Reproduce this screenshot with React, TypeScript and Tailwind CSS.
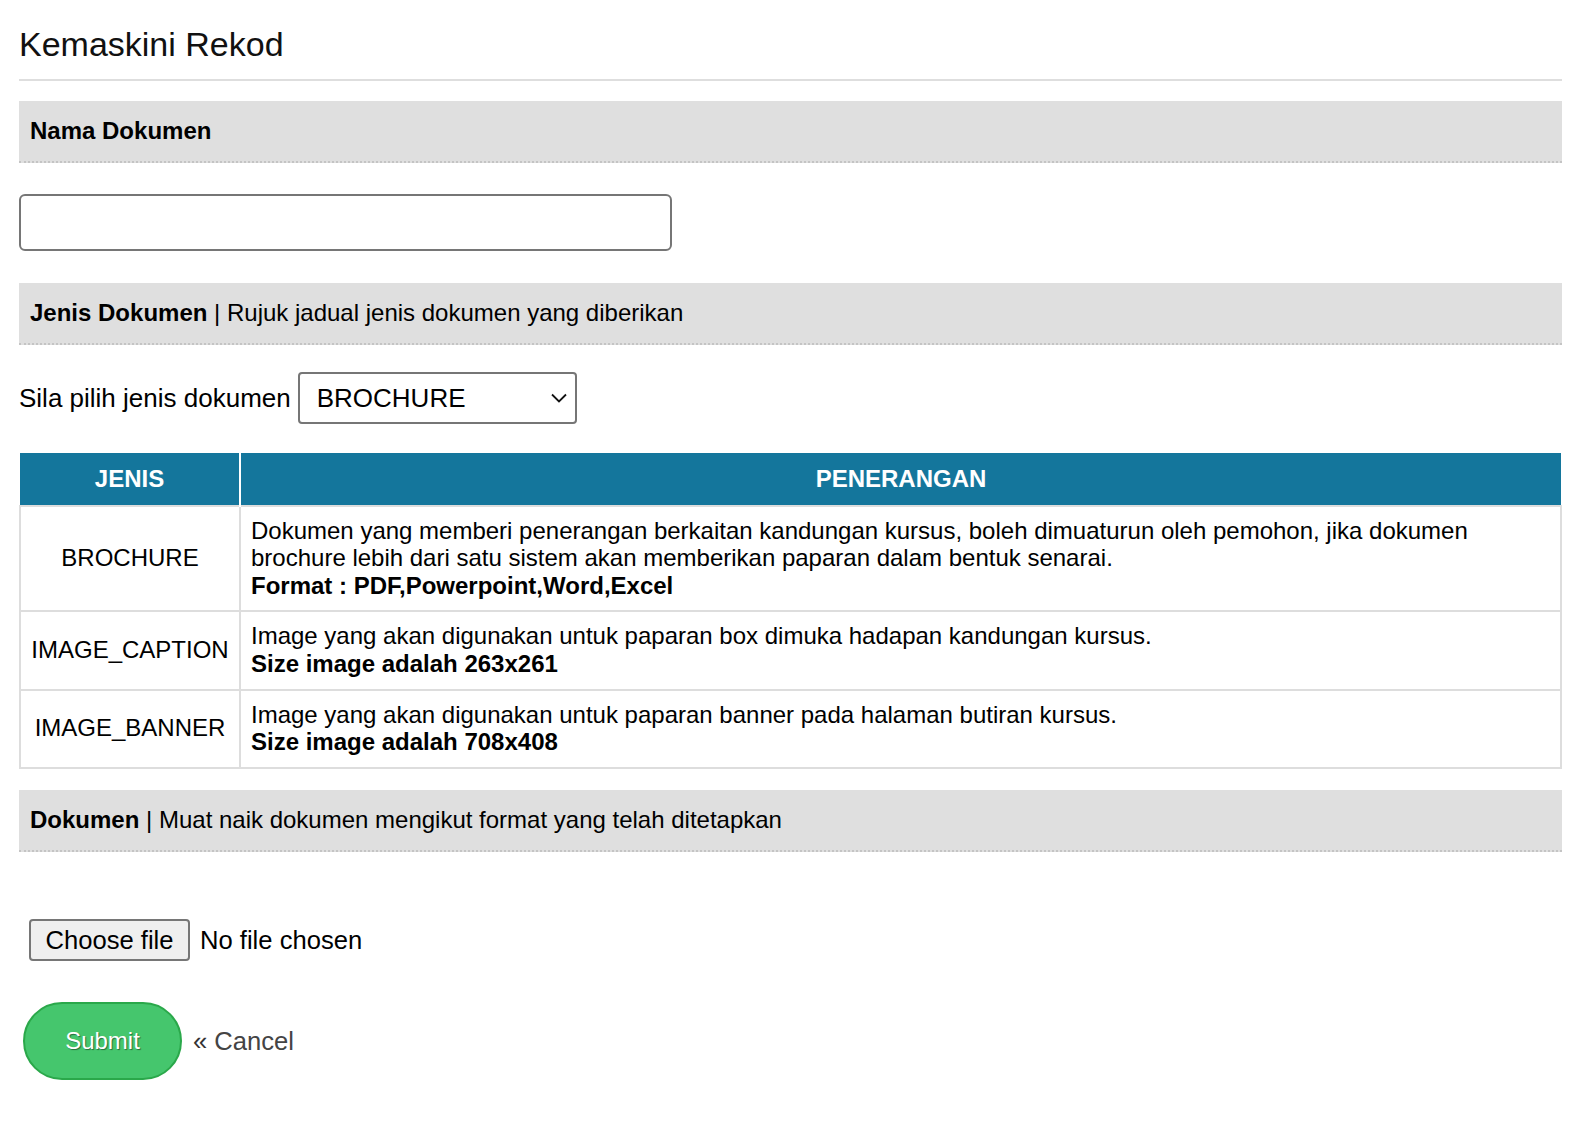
const rows = [
    {
        jenis: "BROCHURE",
        text: "Dokumen yang memberi penerangan berkaitan kandungan kursus, boleh dimuaturun oleh pemohon, jika dokumen brochure lebih dari satu sistem akan memberikan paparan dalam bentuk senarai.",
        bold: "Format : PDF,Powerpoint,Word,Excel",
    },
    {
        jenis: "IMAGE_CAPTION",
        text: "Image yang akan digunakan untuk paparan box dimuka hadapan kandungan kursus.",
        bold: "Size image adalah 263x261",
    },
    {
        jenis: "IMAGE_BANNER",
        text: "Image yang akan digunakan untuk paparan banner pada halaman butiran kursus.",
        bold: "Size image adalah 708x408",
    },
];

const SectionBar = ({ title, note }: { title: string; note?: string }) => (
    <div className="h-[62px] flex items-center px-[11px] bg-[#dfdfdf] border-b-2 border-dotted border-[#c4c4c4] text-[24px] text-black">
        <span className="font-bold">{title}</span>
        {note && <span>&nbsp;| {note}</span>}
    </div>
);

const App = () => {
    return (
        <div className="min-h-screen bg-white font-['Liberation_Sans',Arial,sans-serif] text-black">
            <div className="ml-[19px] w-[1543px] pt-[25px]">
                <h1 className="text-[34px] leading-[1.15] text-[#111]">Kemaskini Rekod</h1>
                <div className="mt-[15px] h-[2px] bg-[#dedede]" />

                <div className="mt-[20px]">
                    <SectionBar title="Nama Dokumen" />
                </div>
                <input
                    type="text"
                    className="mt-[31px] block w-[653px] h-[57px] rounded-[6px] border-2 border-[#767676] px-3 text-[25.6px] outline-none"
                />

                <div className="mt-[32px]">
                    <SectionBar title="Jenis Dokumen" note="Rujuk jadual jenis dokumen yang diberikan" />
                </div>

                <div className="mt-[27px] flex items-center h-[52px] text-[26px]">
                    <span>Sila pilih jenis dokumen</span>
                    <div className="ml-[7px] w-[279px] h-[52px] flex items-center justify-between rounded-[4px] border-2 border-[#767676] pl-[17px] pr-[8px]">
                        <span>BROCHURE</span>
                        <svg width="16" height="10" viewBox="0 0 16 10" fill="none">
                            <path d="M1 1.5 L8 8.5 L15 1.5" stroke="#111" strokeWidth="1.8" />
                        </svg>
                    </div>
                </div>

                <table className="mt-[29px] w-full border-collapse text-[24px] leading-[1.15]">
                    <thead>
                        <tr className="bg-[#14769c] text-white">
                            <th className="w-[220px] py-3 font-bold border-r-2 border-white">JENIS</th>
                            <th className="py-3 font-bold">PENERANGAN</th>
                        </tr>
                    </thead>
                    <tbody>
                        {rows.map((r) => (
                            <tr key={r.jenis}>
                                <td className="border-2 border-[#dddddd] text-center px-[10px] pt-[10px] pb-[11px]">{r.jenis}</td>
                                <td className="border-2 border-[#dddddd] px-[10px] pt-[10px] pb-[11px]">
                                    {r.text}
                                    <br />
                                    <b>{r.bold}</b>
                                </td>
                            </tr>
                        ))}
                    </tbody>
                </table>

                <div className="mt-[21px]">
                    <SectionBar title="Dokumen" note="Muat naik dokumen mengikut format yang telah ditetapkan" />
                </div>

                <div className="mt-[67px] ml-[10px] flex items-center text-[25.6px]">
                    <label className="h-[42px] w-[161px] flex items-center justify-center rounded-[4px] border-2 border-[#767676] bg-[#efefef] cursor-pointer">
                        Choose file
                    </label>
                    <span className="ml-[10px]">No file chosen</span>
                </div>

                <div className="mt-[41px] ml-[4px] flex items-center">
                    <button className="w-[159px] h-[78px] rounded-full bg-[#45c66d] border-2 border-[#2aa84a] text-white text-[24px] [text-shadow:1px_1px_1px_rgba(0,0,0,0.45)]">
                        Submit
                    </button>
                    <span className="ml-[11px] text-[25.6px] text-[#333]">
                        « <span className="text-[#444]">Cancel</span>
                    </span>
                </div>
            </div>
        </div>
    );
};

export default App;
